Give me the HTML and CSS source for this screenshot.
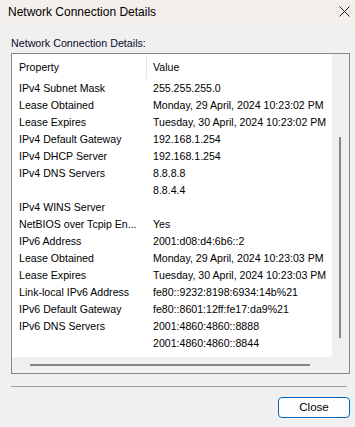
FILE: index.html
```html
<!DOCTYPE html>
<html>
<head>
<meta charset="utf-8">
<link rel="stylesheet" href="styles.css">
</head>
<body>
<div class="window">
  <div class="titlebar">
    <span class="title">Network Connection Details</span>
    <svg class="xicon" width="11" height="11" viewBox="0 0 11 11"><path d="M0.5 0.5 L10.5 10.5 M10.5 0.5 L0.5 10.5" stroke="#1b1b1b" stroke-width="1" fill="none"/></svg>
  </div>
  <div class="content">
    <div class="label">Network Connection Details:</div>
    <div class="listbox">
      <div class="list">
        <div class="row head"><span class="c1">Property</span><span class="c2 hsep">Value</span></div>
        <div class="row"><span class="c1">IPv4 Subnet Mask</span><span class="c2">255.255.255.0</span></div>
        <div class="row"><span class="c1">Lease Obtained</span><span class="c2">Monday, 29 April, 2024 10:23:02 PM</span></div>
        <div class="row"><span class="c1">Lease Expires</span><span class="c2">Tuesday, 30 April, 2024 10:23:02 PM</span></div>
        <div class="row"><span class="c1">IPv4 Default Gateway</span><span class="c2">192.168.1.254</span></div>
        <div class="row"><span class="c1">IPv4 DHCP Server</span><span class="c2">192.168.1.254</span></div>
        <div class="row"><span class="c1">IPv4 DNS Servers</span><span class="c2">8.8.8.8</span></div>
        <div class="row"><span class="c1"></span><span class="c2">8.8.4.4</span></div>
        <div class="row"><span class="c1">IPv4 WINS Server</span><span class="c2"></span></div>
        <div class="row"><span class="c1">NetBIOS over Tcpip En...</span><span class="c2">Yes</span></div>
        <div class="row"><span class="c1">IPv6 Address</span><span class="c2">2001:d08:d4:6b6::2</span></div>
        <div class="row"><span class="c1">Lease Obtained</span><span class="c2">Monday, 29 April, 2024 10:23:03 PM</span></div>
        <div class="row"><span class="c1">Lease Expires</span><span class="c2">Tuesday, 30 April, 2024 10:23:03 PM</span></div>
        <div class="row"><span class="c1">Link-local IPv6 Address</span><span class="c2">fe80::9232:8198:6934:14b%21</span></div>
        <div class="row"><span class="c1">IPv6 Default Gateway</span><span class="c2">fe80::8601:12ff:fe17:da9%21</span></div>
        <div class="row"><span class="c1">IPv6 DNS Servers</span><span class="c2">2001:4860:4860::8888</span></div>
        <div class="row"><span class="c1"></span><span class="c2">2001:4860:4860::8844</span></div>
      </div>
      <div class="vscroll"><div class="vthumb"></div></div>
      <div class="hscroll"><div class="hthumb"></div></div>
      <div class="corner"></div>
    </div>
    <div class="sep"></div>
    <div class="buttons"><button class="btn">Close</button></div>
  </div>
</div>
</body>
</html>
```

FILE: styles.css
```css
* { box-sizing: border-box; }
html, body { margin: 0; padding: 0; }
body {
  width: 355px;
  height: 427px;
  background: #f0f0f0;
  font-family: "Liberation Sans", Arial, sans-serif;
  font-size: 10.6px;
  color: #000;
  overflow: hidden;
}
.window { width: 355px; height: 427px; display: flex; flex-direction: column; }
.titlebar {
  height: 25px;
  background: #f4efed;
  display: flex;
  align-items: center;
  justify-content: space-between;
  padding: 0 5px 2px 8px;
}
.title { font-size: 12px; color: #000; }
.content { padding: 0 5px 0 11px; display: flex; flex-direction: column; }
.label { margin-top: 11px; line-height: 15px; color: #0a0a2a; font-size: 10.7px; }
.listbox {
  margin-top: 2px;
  height: 321px;
  border: 1px solid #828790;
  display: grid;
  grid-template-columns: 320px 18px;
  grid-template-rows: 303px 16px;
  background: #f0f0f0;
}
.list {
  background: #fff;
  overflow: hidden;
  white-space: nowrap;
  border-bottom-right-radius: 3px;
}
.row { display: flex; height: 17px; line-height: 17px; }
.row.head { height: 26px; line-height: 26px; }
.c1 { width: 135px; flex: none; padding-left: 7px; overflow: hidden; }
.c2 { padding-left: 6px; flex: none; }
.hsep { position: relative; }
.hsep::before {
  content: "";
  position: absolute;
  left: -1px; top: 1px; bottom: 1px;
  width: 1px;
  background: #e5e5e5;
}
.vscroll { position: relative; }
.vthumb {
  position: absolute;
  left: 7px; top: 83px;
  width: 2px; height: 201px;
  background: #858585;
}
.hscroll { position: relative; }
.hthumb {
  position: absolute;
  left: 18px; top: 7px;
  width: 280px; height: 2px;
  background: #858585;
}
.sep { margin-top: 12px; height: 1px; background: #a0a0a0; margin-right: 3px; }
.buttons { display: flex; justify-content: flex-end; margin-top: 10px; }
.btn {
  width: 72px; height: 21px;
  border: 1px solid #0067c0;
  border-radius: 4px;
  background: #fdfdfd;
  font-family: inherit;
  font-size: 11.5px;
  color: #000;
  padding: 0 0 1px 0;
}
```
